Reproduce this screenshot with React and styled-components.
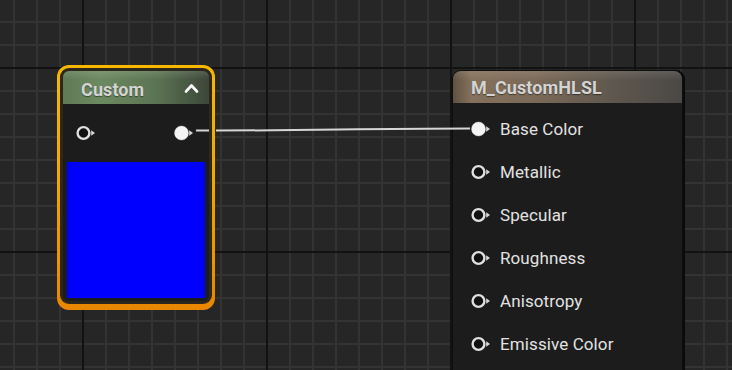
import React from "react";
import styled, { createGlobalStyle } from "styled-components";

const GlobalStyle = createGlobalStyle`
  html, body { margin: 0; padding: 0; background: #262626; }
  body { font-family: Roboto, "Liberation Sans", sans-serif; }
`;

const Canvas = styled.div`
  position: relative;
  width: 732px;
  height: 370px;
  overflow: hidden;
  background-color: #262626;
  background-image:
    linear-gradient(to right, #121212 2px, transparent 2px),
    linear-gradient(to bottom, #121212 2px, transparent 2px),
    linear-gradient(to right, #333333 2px, transparent 2px),
    linear-gradient(to bottom, #333333 2px, transparent 2px);
  background-size: 184px 184px, 184px 184px, 23px 23px, 23px 23px;
  background-position: 82px 0, 0 67px, 13px 0, 0 21px;
`;

const WireLayer = styled.svg`
  position: absolute;
  left: 0;
  top: 0;
  width: 732px;
  height: 370px;
  pointer-events: none;
  z-index: 2;
`;

/* ---------- Custom (selected) node ---------- */
const SelectedNode = styled.div`
  position: absolute;
  left: ${(p) => p.$x}px;
  top: ${(p) => p.$y}px;
  width: 158px;
  height: 245px;
  box-sizing: border-box;
  padding: 3px 3px 6px 3px;
  border-radius: 12px;
  background: linear-gradient(180deg, #f7b800 0%, #f3a400 50%, #e98600 100%);
  z-index: 1;
`;

const NodeFrame = styled.div`
  height: 100%;
  box-sizing: border-box;
  padding: 3px;
  border-radius: 9px;
  background: #2b271c;
  display: flex;
  flex-direction: column;
`;

const GreenHeader = styled.div`
  height: 33px;
  flex: none;
  box-sizing: border-box;
  display: flex;
  align-items: center;
  justify-content: space-between;
  padding: 3px 10px 0 18px;
  border-radius: 6px 6px 0 0;
  background:
    linear-gradient(180deg, rgba(255,255,255,0.12) 0%, rgba(255,255,255,0) 25%),
    linear-gradient(90deg, #5f7a55 0%, #6c8a61 25%, #5b7352 65%, #3c4639 100%);
`;

const HeaderTitle = styled.span`
  font-size: 18px;
  font-weight: 700;
  color: #d4d4d4;
  text-shadow: 0 1px 1px rgba(0,0,0,0.45);
  letter-spacing: 0.1px;
`;

const NodeBody = styled.div`
  flex: 1;
  display: flex;
  flex-direction: column;
  background: #1c1c1c;
  border-radius: 0 0 5px 5px;
  padding: 0 4px 3px 4px;
`;

const PinRow = styled.div`
  height: 57px;
  flex: none;
  display: flex;
  align-items: center;
  justify-content: space-between;
  padding: 0 11px 0 9px;
  box-sizing: border-box;
`;

const Preview = styled.div`
  flex: 1;
  margin-top: 1px;
  background: ${(p) => p.$color};
`;

/* ---------- Material result node ---------- */
const MaterialNode = styled.div`
  position: absolute;
  left: ${(p) => p.$x}px;
  top: ${(p) => p.$y}px;
  width: 229px;
  height: 330px;
  border-radius: 8px 8px 0 0;
  background: #1c1c1c;
  box-shadow: 0 0 0 1px #0e0e0e, 2px 0 0 1px #0a0a0a;
  display: flex;
  flex-direction: column;
  z-index: 1;
`;

const BrownHeader = styled.div`
  height: 32px;
  flex: none;
  display: flex;
  align-items: center;
  padding-left: 18px;
  border-radius: 8px 8px 0 0;
  background:
    linear-gradient(180deg, rgba(255,255,255,0.10) 0%, rgba(255,255,255,0) 30%),
    linear-gradient(90deg, #5f5142 0%, #85715c 8%, #7b6a58 35%, #5f574e 70%, #4a4845 100%);
`;

const PinList = styled.div`
  display: flex;
  flex-direction: column;
  padding: 4px 0 0 18px;
`;

const InputRow = styled.div`
  height: 43px;
  display: flex;
  align-items: center;
  gap: 9px;
`;

const PinLabel = styled.span`
  font-size: 17px;
  color: #e2e2e2;
  letter-spacing: 0.1px;
`;

const PinSvg = styled.svg`
  display: block;
  width: 20px;
  height: 16px;
  flex: none;
`;

function Pin({ filled }) {
  return (
    <PinSvg viewBox="0 0 20 16">
      <circle
        cx="7.5"
        cy="8"
        r={filled ? 7 : 5.9}
        fill={filled ? "#f4f4f4" : "#111111"}
        stroke="#e0e0e0"
        strokeWidth={filled ? 0.4 : 2.4}
      />
      <polygon points="15.2,5.3 19,8 15.2,10.7" fill="#d8d8d8" />
    </PinSvg>
  );
}

const ChevronSvg = styled.svg`
  display: block;
  width: 15px;
  height: 10px;
  margin-top: -3px;
`;

function ChevronUp() {
  return (
    <ChevronSvg viewBox="0 0 15 10">
      <polyline
        points="2,8.5 7.5,2.5 13,8.5"
        fill="none"
        stroke="#ffffff"
        strokeWidth="2.6"
        strokeLinecap="round"
        strokeLinejoin="round"
      />
    </ChevronSvg>
  );
}

const inputs = [
  { label: "Base Color", connected: true },
  { label: "Metallic" },
  { label: "Specular" },
  { label: "Roughness" },
  { label: "Anisotropy" },
  { label: "Emissive Color" },
];

export default function App() {
  return (
    <>
      <GlobalStyle />
      <Canvas>
        <SelectedNode $x={57} $y={65}>
          <NodeFrame>
            <GreenHeader>
              <HeaderTitle>Custom</HeaderTitle>
              <ChevronUp />
            </GreenHeader>
            <NodeBody>
              <PinRow>
                <Pin />
                <Pin filled />
              </PinRow>
              <Preview $color="#0000ff" />
            </NodeBody>
          </NodeFrame>
        </SelectedNode>

        <MaterialNode $x={453} $y={71}>
          <BrownHeader>
            <HeaderTitle>M_CustomHLSL</HeaderTitle>
          </BrownHeader>
          <PinList>
            {inputs.map((it) => (
              <InputRow key={it.label}>
                <Pin filled={it.connected} />
                <PinLabel>{it.label}</PinLabel>
              </InputRow>
            ))}
          </PinList>
        </MaterialNode>

        <WireLayer viewBox="0 0 732 370">
          <path
            d="M196 130.5 L209 130.5 M216 130.5 C 320 130.5, 360 128.5, 470 128.5"
            fill="none"
            stroke="#d6d6d6"
            strokeWidth="2"
          />
        </WireLayer>
      </Canvas>
    </>
  );
}
